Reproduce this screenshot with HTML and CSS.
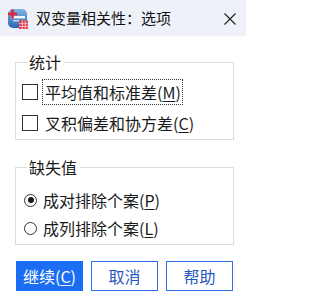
FILE: index.html
```html
<!DOCTYPE html>
<html lang="zh-CN">
<head>
<meta charset="utf-8">
<title>双变量相关性：选项</title>
<link rel="stylesheet" href="styles.css">
</head>
<body>
<div class="dialog">
  <div class="titlebar">
    <svg class="app-icon" viewBox="0 0 22 22" width="22" height="22">
      <defs>
        <linearGradient id="g" x1="0" y1="0" x2="0" y2="1">
          <stop offset="0" stop-color="#7db3e6"/>
          <stop offset="1" stop-color="#2a68b3"/>
        </linearGradient>
      </defs>
      <rect x="1" y="1" width="19" height="19" rx="5" fill="url(#g)"/>
      <rect x="4" y="8" width="14" height="2.5" fill="#ffffff" opacity="0.9"/>
      <rect x="6" y="12" width="6" height="1.5" fill="#ffffff" opacity="0.7"/>
      <rect x="4.2" y="1.5" width="2.6" height="9" fill="#d8283c"/>
      <rect x="1" y="4.7" width="9" height="2.6" fill="#d8283c"/>
      <rect x="12" y="12.5" width="9" height="8.5" fill="#e2404f"/>
      <rect x="12" y="15.3" width="9" height="0.8" fill="#f8c9cf"/>
      <rect x="12" y="18.2" width="9" height="0.8" fill="#f8c9cf"/>
      <rect x="14.9" y="12.5" width="0.8" height="8.5" fill="#f8c9cf"/>
      <rect x="17.8" y="12.5" width="0.8" height="8.5" fill="#f8c9cf"/>
    </svg>
    <span class="title">双变量相关性：选项</span>
    <svg class="close" viewBox="0 0 12 12" width="12" height="12">
      <path d="M0.5 0.5 L11.5 11.5 M11.5 0.5 L0.5 11.5" stroke="#1c1c1c" stroke-width="1.1" fill="none"/>
    </svg>
  </div>
  <div class="content">
    <fieldset class="group group-stats">
      <legend>统计</legend>
      <label class="row"><span class="check"></span><span class="text focus">平均值和标准差(<u>M</u>)</span></label>
      <label class="row"><span class="check"></span><span class="text">叉积偏差和协方差(<u>C</u>)</span></label>
    </fieldset>
    <fieldset class="group group-missing">
      <legend>缺失值</legend>
      <label class="row radio-row"><span class="radio checked"></span><span class="text">成对排除个案(<u>P</u>)</span></label>
      <label class="row radio-row"><span class="radio"></span><span class="text">成列排除个案(<u>L</u>)</span></label>
    </fieldset>
    <div class="buttons">
      <button class="btn primary">继续(<u>C</u>)</button>
      <button class="btn">取消</button>
      <button class="btn">帮助</button>
    </div>
  </div>
</div>
</body>
</html>
```
FILE: styles.css
```css
html, body {
  margin: 0;
  padding: 0;
  background: #ffffff;
}
body {
  font-family: "Noto Sans CJK SC", "Noto Sans", sans-serif;
  color: #1a1a1a;
  width: 246px;
  height: 303px;
  overflow: hidden;
}
.dialog {
  width: 246px;
  height: 303px;
  background: #ffffff;
}
.titlebar {
  height: 36px;
  background: #eef2f8;
  display: flex;
  align-items: center;
  padding-left: 7px;
}
.app-icon {
  flex: none;
  margin-top: 1px;
}
.title {
  margin-left: 7px;
  font-size: 15px;
  line-height: 20px;
  color: #111111;
  flex: 1;
}
.close {
  flex: none;
  margin-right: 10px;
  margin-top: 1px;
}
.content {
  padding: 17px 12px 0 15px;
}
.group {
  margin: 0;
  border: 1px solid #dcdcdc;
  padding: 9px 0 4px 6px;
  min-width: 0;
}
.group legend {
  margin-left: 5px;
  padding: 0 3px 0 2px;
  font-size: 16px;
  line-height: 18px;
  color: #1a1a1a;
}
.group-stats {
  display: flex;
  flex-direction: column;
  gap: 7px;
}
.group-missing {
  margin-top: 18px;
  padding-top: 12px;
  display: flex;
  flex-direction: column;
  gap: 4px;
}
.row {
  display: flex;
  align-items: center;
  height: 24px;
  font-size: 16px;
}
.check {
  flex: none;
  width: 14px;
  height: 14px;
  border: 1px solid #333333;
  background: #ffffff;
  margin-right: 4px;
}
.radio {
  flex: none;
  box-sizing: border-box;
  width: 13px;
  height: 13px;
  border: 1px solid #333333;
  border-radius: 50%;
  margin-left: 2px;
  margin-right: 3px;
  display: flex;
  align-items: center;
  justify-content: center;
}
.radio.checked::after {
  content: "";
  width: 6px;
  height: 6px;
  border-radius: 50%;
  background: #1a1a1a;
}
.text {
  padding: 1px 1px 1px 2px;
  border: 1px dotted transparent;
  line-height: 22px;
  white-space: nowrap;
}
.text.focus {
  border-color: #333333;
}
.text u, .btn u {
  text-underline-offset: 2px;
}
.buttons {
  margin-top: 16px;
  margin-left: 1px;
  display: flex;
  gap: 8px;
}
.btn {
  width: 67px;
  height: 30px;
  box-sizing: border-box;
  border: 1.5px solid #2f72e8;
  background: #ffffff;
  color: #1f58c0;
  font-family: "Noto Sans CJK SC", "Noto Sans", sans-serif;
  font-size: 16px;
  padding: 0;
  line-height: 26px;
}
.btn.primary {
  background: #1b6ef3;
  border-color: #1b6ef3;
  color: #ffffff;
}
```
